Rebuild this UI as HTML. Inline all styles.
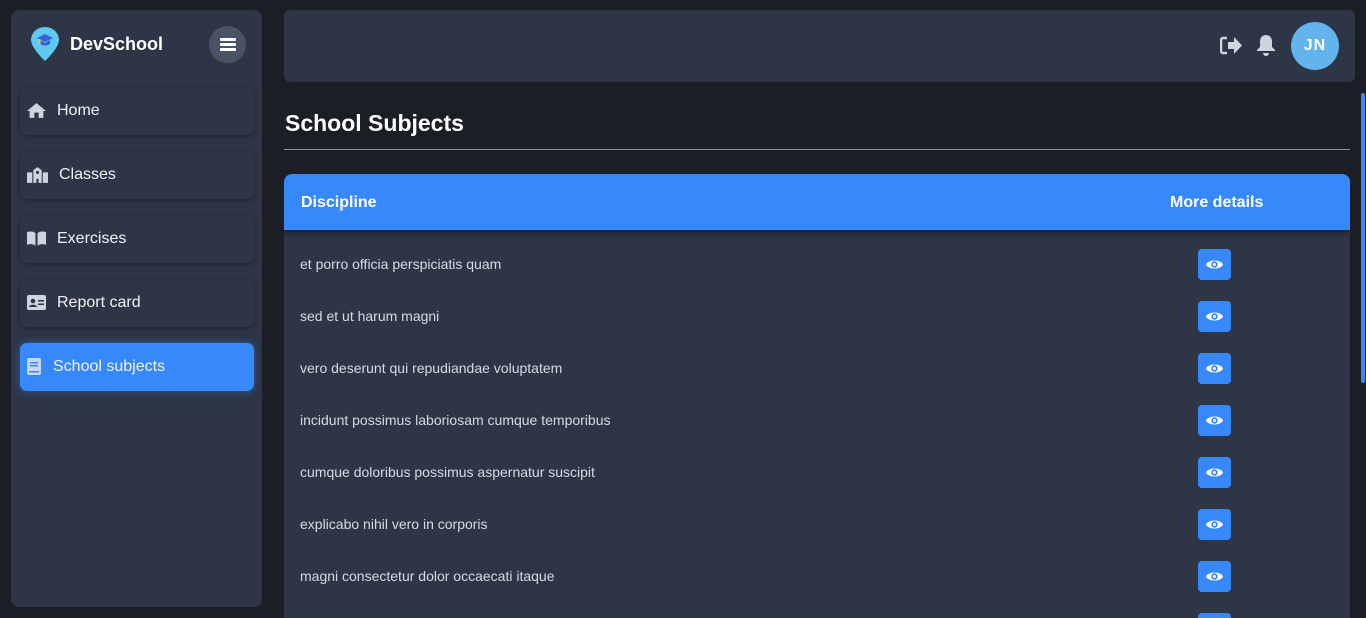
<!DOCTYPE html>
<html><head><meta charset="utf-8"><style>
*{box-sizing:border-box;margin:0;padding:0}
html,body{width:1366px;height:618px;overflow:hidden}
body{background:#1b1e24;font-family:"Liberation Sans",Roboto,sans-serif;color:#e8ebf0;position:relative}
.side{position:absolute;left:11px;top:10px;width:251px;height:597px;background:#2e3546;border-radius:8px}
.logo{position:absolute;left:19px;top:16px}
.brand{position:absolute;left:59px;top:24px;font-weight:bold;font-size:18px;color:#fff}
.burger{position:absolute;left:198px;top:16px;width:37px;height:37px;border-radius:50%;background:#4a5366}
.burger i{position:absolute;left:11px;width:16px;height:3px;background:#fff;border-radius:1px}
.nav{position:absolute;left:9px;width:234px;height:48px;border-radius:7px;background:#2e3546;box-shadow:0 1px 4px rgba(0,0,0,.35);font-size:16px;color:#f0f2f5}
.nav span{position:absolute;left:37px;top:15px}
.nav svg{position:absolute;left:7px;top:15px}
.nav.act{background:#3788fa;box-shadow:0 0 8px rgba(55,136,250,.5)}
.top{position:absolute;left:284px;top:10px;width:1071px;height:72px;background:#2e3546;border-radius:6px}
.av{position:absolute;left:1007px;top:12px;width:48px;height:48px;border-radius:50%;background:#63b3ed;color:#fff;font-weight:bold;font-size:16px;text-align:center;line-height:48px;letter-spacing:1px}
h1{position:absolute;left:285px;top:110px;font-size:23px;font-weight:bold;color:#fff}
.hr{position:absolute;left:284px;top:149px;width:1066px;height:1px;background:#8a8f98}
.tbl{position:absolute;left:284px;top:174px;width:1066px;height:444px;background:#2e3546;border-radius:8px 8px 0 0;overflow:hidden}
.th{height:56px;background:#3788fa;position:relative;font-weight:bold;font-size:16px;color:#fff;box-shadow:0 3px 5px rgba(0,0,0,.4)}
.th span{position:absolute;top:20px}
.row{position:absolute;left:0;width:1066px;height:52px;font-size:14px;color:#d6dbe3}
.row span{position:absolute;left:16px;top:6px}
.eye{position:absolute;left:914px;top:-1px;width:33px;height:31px;background:#3788fa;border-radius:4px}
.eye svg{position:absolute;left:7px;top:8px}
.sb{position:absolute;left:1361px;top:93px;width:4px;height:290px;background:#3788fa;border-radius:2px}
</style></head><body>
<div class="side">
 <svg class="logo" width="30" height="36" viewBox="0 0 30 36"><path d="M15 1C7 1 1 7 1 14c0 8 14 21 14 21s14-13 14-21C29 7 23 1 15 1z" fill="#5fc9f0"/><path d="M7 12l8-4 8 4-8 4z" fill="#3a5fd8"/><path d="M10 14v4c3 2 7 2 10 0v-4l-5 3z" fill="#3a5fd8"/><rect x="9" y="13" width="1.5" height="6" fill="#f5c542"/></svg>
 <div class="brand">DevSchool</div>
 <div class="burger"><i style="top:12px"></i><i style="top:17px"></i><i style="top:22px"></i></div>
 <div class="nav" style="top:77px"><svg width="19" height="17" viewBox="0 0 18 16"><path d="M9 1L0 8.5h2.5V15h4.5v-5h4v5h4.5V8.5H18z" fill="#cfd5de"/></svg><span>Home</span></div>
 <div class="nav" style="top:141px"><svg width="21" height="17" viewBox="0 0 20 16"><path d="M6 4l4-3 4 3v12h-3v-4H9v4H6zM0 6h5v10H0zM15 6h5v10h-5z" fill="#cfd5de"/><circle cx="10" cy="6" r="1.5" fill="#2e3546"/></svg><span style="left:39px">Classes</span></div>
 <div class="nav" style="top:205px"><svg width="19" height="17" viewBox="0 0 18 16"><path d="M0 2c3-1 6-1 8 1v12C6 13 3 13 0 14zM18 2c-3-1-6-1-8 1v12c2-2 5-2 8-1z" fill="#cfd5de"/></svg><span>Exercises</span></div>
 <div class="nav" style="top:269px"><svg width="19" height="15" viewBox="0 0 19 15" style="top:16px"><rect width="19" height="15" rx="2" fill="#cfd5de"/><circle cx="6" cy="6" r="2.3" fill="#2e3546"/><path d="M2 12c0-3 8-3 8 0z" fill="#2e3546"/><rect x="11" y="5" width="6" height="1.5" fill="#2e3546"/><rect x="11" y="8.5" width="6" height="1.5" fill="#2e3546"/></svg><span>Report card</span></div>
 <div class="nav act" style="top:333px"><svg width="14" height="17" viewBox="0 0 14 17"><rect width="14" height="17" rx="2" fill="#c9d6ea"/><rect x="3" y="4" width="8" height="1.5" fill="#3788fa"/><rect x="3" y="7" width="8" height="1.5" fill="#3788fa"/><rect x="2" y="13" width="10" height="1.5" fill="#3788fa"/></svg><span style="left:33px">School subjects</span></div>
</div>
<div class="top">
 <svg style="position:absolute;left:936px;top:26px" width="22" height="19" viewBox="0 0 22 19"><path d="M7 2H3a2 2 0 0 0-2 2v11a2 2 0 0 0 2 2h4" stroke="#cfd5de" stroke-width="2.5" fill="none"/><path d="M8 6h6V1l8 8.5-8 8.5v-5H8z" fill="#cfd5de"/></svg>
 <svg style="position:absolute;left:972px;top:24px" width="20" height="22" viewBox="0 0 20 22"><path d="M10 1c4 0 6 3 6 7v5l3 3v1H1v-1l3-3V8c0-4 2-7 6-7z" fill="#cfd5de"/><path d="M7 19h6a3 3 0 0 1-6 0z" fill="#cfd5de"/></svg>
 <div class="av">JN</div>
</div>
<h1>School Subjects</h1>
<div class="hr"></div>
<div class="tbl">
 <div class="th"><span style="left:17px">Discipline</span><span style="left:886px">More details</span></div>
 <div class="row" style="top:76px"><span>et porro officia perspiciatis quam</span><div class="eye"><svg width="19" height="15" viewBox="0 0 17 14"><path d="M0.5 7C3 2 14 2 16.5 7 14 12 3 12 0.5 7z" fill="#fff"/><circle cx="8.5" cy="7" r="3" fill="#3788fa"/><circle cx="8.5" cy="7" r="1.4" fill="#fff"/></svg></div></div>
 <div class="row" style="top:128px"><span>sed et ut harum magni</span><div class="eye"><svg width="19" height="15" viewBox="0 0 17 14"><path d="M0.5 7C3 2 14 2 16.5 7 14 12 3 12 0.5 7z" fill="#fff"/><circle cx="8.5" cy="7" r="3" fill="#3788fa"/><circle cx="8.5" cy="7" r="1.4" fill="#fff"/></svg></div></div>
 <div class="row" style="top:180px"><span>vero deserunt qui repudiandae voluptatem</span><div class="eye"><svg width="19" height="15" viewBox="0 0 17 14"><path d="M0.5 7C3 2 14 2 16.5 7 14 12 3 12 0.5 7z" fill="#fff"/><circle cx="8.5" cy="7" r="3" fill="#3788fa"/><circle cx="8.5" cy="7" r="1.4" fill="#fff"/></svg></div></div>
 <div class="row" style="top:232px"><span>incidunt possimus laboriosam cumque temporibus</span><div class="eye"><svg width="19" height="15" viewBox="0 0 17 14"><path d="M0.5 7C3 2 14 2 16.5 7 14 12 3 12 0.5 7z" fill="#fff"/><circle cx="8.5" cy="7" r="3" fill="#3788fa"/><circle cx="8.5" cy="7" r="1.4" fill="#fff"/></svg></div></div>
 <div class="row" style="top:284px"><span>cumque doloribus possimus aspernatur suscipit</span><div class="eye"><svg width="19" height="15" viewBox="0 0 17 14"><path d="M0.5 7C3 2 14 2 16.5 7 14 12 3 12 0.5 7z" fill="#fff"/><circle cx="8.5" cy="7" r="3" fill="#3788fa"/><circle cx="8.5" cy="7" r="1.4" fill="#fff"/></svg></div></div>
 <div class="row" style="top:336px"><span>explicabo nihil vero in corporis</span><div class="eye"><svg width="19" height="15" viewBox="0 0 17 14"><path d="M0.5 7C3 2 14 2 16.5 7 14 12 3 12 0.5 7z" fill="#fff"/><circle cx="8.5" cy="7" r="3" fill="#3788fa"/><circle cx="8.5" cy="7" r="1.4" fill="#fff"/></svg></div></div>
 <div class="row" style="top:388px"><span>magni consectetur dolor occaecati itaque</span><div class="eye"><svg width="19" height="15" viewBox="0 0 17 14"><path d="M0.5 7C3 2 14 2 16.5 7 14 12 3 12 0.5 7z" fill="#fff"/><circle cx="8.5" cy="7" r="3" fill="#3788fa"/><circle cx="8.5" cy="7" r="1.4" fill="#fff"/></svg></div></div>
 <div class="row" style="top:440px"><div class="eye"></div></div>
</div>
<div class="sb"></div>
</body></html>
